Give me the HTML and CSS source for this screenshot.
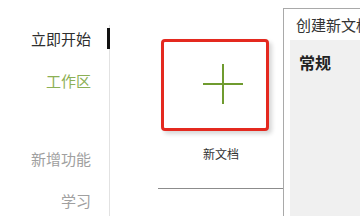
FILE: index.html
```html
<!DOCTYPE html>
<html lang="zh-CN">
<head>
<meta charset="utf-8">
<link rel="stylesheet" href="styles.css">
</head>
<body>
<div class="app">
  <nav class="sidebar">
    <div class="nav-item active">立即开始</div>
    <div class="nav-item green">工作区</div>
    <div class="nav-item muted group">新增功能</div>
    <div class="nav-item muted">学习</div>
  </nav>
  <main class="main">
    <div class="tile">
      <div class="card">
        <svg class="plus" width="40" height="40" viewBox="0 0 40 40"><path d="M20 0V40M0 20H40" stroke="#6f9b2f" stroke-width="2" fill="none"/></svg>
      </div>
      <div class="tile-label">新文档</div>
    </div>
    <div class="rule"></div>
  </main>
  <section class="dialog">
    <div class="dialog-title">创建新文档</div>
    <div class="dialog-body">
      <div class="panel">
        <div class="panel-heading">常规</div>
      </div>
    </div>
  </section>
</div>
</body>
</html>
```

FILE: styles.css
```css
html, body {
  margin: 0;
  padding: 0;
  background: #ffffff;
}
body {
  width: 360px;
  height: 216px;
  overflow: hidden;
  font-family: "Noto Sans CJK SC", "Noto Sans", sans-serif;
}
.app {
  display: flex;
  height: 216px;
}
.sidebar {
  width: 109px;
  flex: none;
  box-sizing: border-box;
  padding: 29px 18px 0 0;
  display: flex;
  flex-direction: column;
  align-items: flex-end;
  gap: 22px;
}
.nav-item {
  font-size: 15px;
  line-height: 20px;
  color: #2e2e2e;
  white-space: nowrap;
  position: relative;
}
.nav-item.active::after {
  content: "";
  position: absolute;
  right: -19px;
  top: -1px;
  width: 3px;
  height: 21px;
  background: #111111;
}
.nav-item.green {
  color: #8cb055;
}
.nav-item.muted {
  color: #a0a0a0;
}
.nav-item.group {
  margin-top: 36px;
}
.main {
  width: 174px;
  flex: none;
  box-sizing: border-box;
  margin-top: 25px;
  border-left: 1px solid #e2e2e2;
  display: flex;
  flex-direction: column;
}
.tile {
  margin: 14px 0 0 51px;
  width: 108px;
}
.card {
  box-sizing: border-box;
  width: 108px;
  height: 92px;
  border: 3px solid #e4291f;
  border-radius: 4px;
  background: #ffffff;
  box-shadow: 3px 3px 4px rgba(0, 0, 0, 0.16);
  display: flex;
  align-items: center;
  justify-content: center;
  padding: 0 0 2px 16px;
}
.plus {
  display: block;
}
.tile-label {
  margin-top: 15px;
  padding-left: 12px;
  text-align: center;
  font-size: 12px;
  line-height: 16px;
  color: #333333;
}
.rule {
  margin: 26px 0 0 48px;
  height: 1px;
  background: #8c8c8c;
}
.dialog {
  flex: 1;
  min-width: 0;
  margin-top: 8px;
  border-left: 1px solid #a9a9a9;
  border-top: 1px solid #a9a9a9;
  background: #ffffff;
  display: flex;
  flex-direction: column;
}
.dialog-title {
  height: 31px;
  line-height: 31px;
  padding-left: 12px;
  font-size: 15px;
  color: #333333;
  white-space: nowrap;
  overflow: hidden;
}
.dialog-body {
  flex: 1;
  display: flex;
  padding-left: 6px;
}
.panel {
  flex: 1;
  background: #f0f0f0;
  padding: 11px 0 0 9px;
}
.panel-heading {
  font-size: 16px;
  line-height: 22px;
  font-weight: bold;
  color: #222222;
  white-space: nowrap;
}
```
